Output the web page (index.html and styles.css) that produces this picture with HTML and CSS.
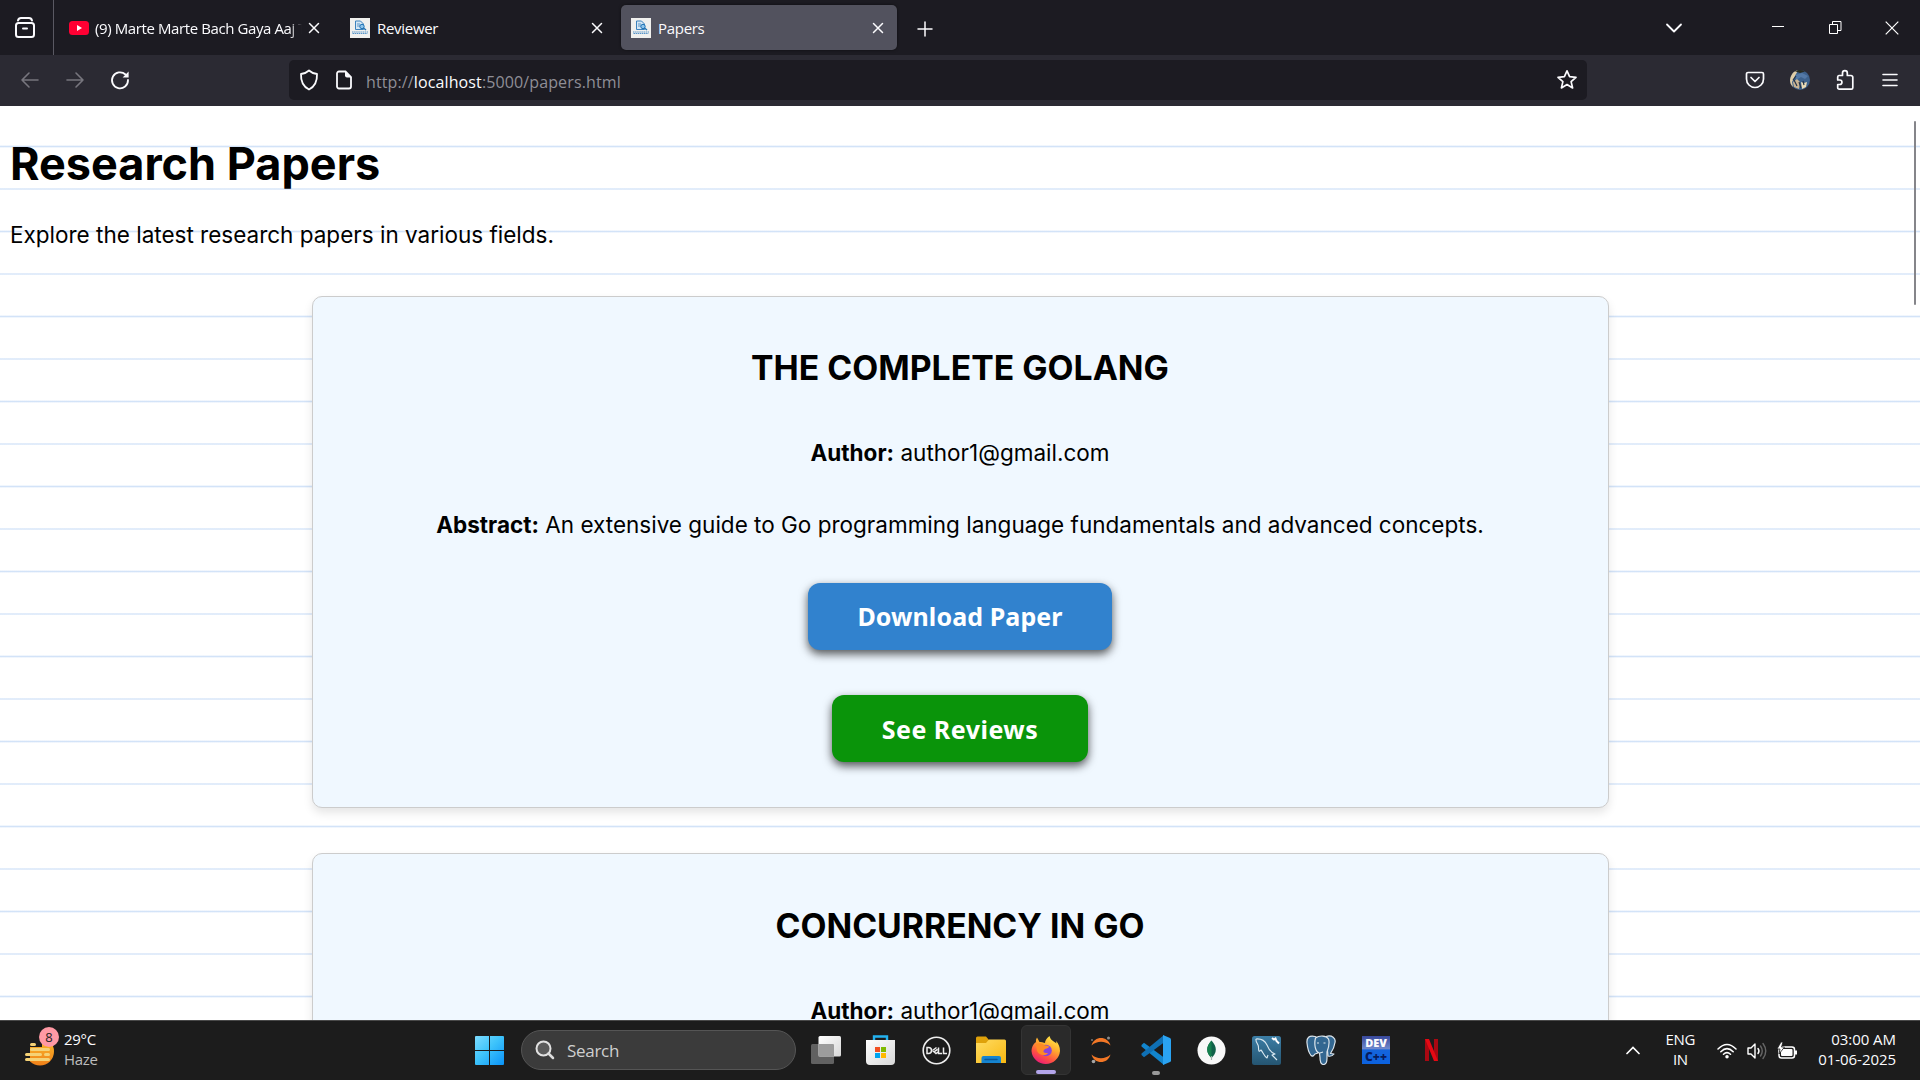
FILE: index.html
```html
<!DOCTYPE html>
<html lang="en">
<head>
<meta charset="utf-8">
<title>Papers</title>
<link rel="stylesheet" href="styles.css">
</head>
<body>
<svg class="defs" width="0" height="0" aria-hidden="true">
  <defs>
    <symbol id="x" viewBox="0 0 12 12"><path d="M1.5 1.5l9 9M10.500 1.500l-9 9" fill="none" stroke="#fbfbfe" stroke-width="1.5" stroke-linecap="round"/></symbol>
    <symbol id="paper" viewBox="0 0 20 20"><rect width="20" height="20" fill="#f0f0ee"/><path d="M5.500 3h5l3 3v5.500h-8z" fill="#d5e6f4" stroke="#3d83bd" stroke-width="1"/><path d="M7 6h3M7 8h4" stroke="#3d83bd" stroke-width=".8"/><circle cx="12" cy="8.500" r="2.200" fill="#8fc5eb" stroke="#2273b4"/><path d="M13.500 10l2.500 2" stroke="#2273b4" stroke-width="1.500"/><path d="M2 14h16M2.500 15.500h15" stroke="#5794c8" stroke-width="1.200" stroke-dasharray="1.500 .6"/></symbol>
  </defs>
</svg>

<header class="tabs">
  <div class="view"><svg width="22" height="26" viewBox="0 0 22 26" fill="none" stroke="#fbfbfe" stroke-width="2" stroke-linecap="round"><path d="M4 5.500C4.500 3.500 5.500 3 7 3h8c1.500 0 2.500.5 3 2.500"/><rect x="2" y="8" width="18" height="14" rx="2.500"/><path d="M9 13.500h4"/></svg></div>
  <div class="tab first"><svg class="fav" viewBox="0 0 20 20"><rect y="3" width="20" height="14" rx="3.500" fill="#ff0033"/><path d="M8 7l5 3-5 3z" fill="#fff"/></svg><span class="label fade">(9) Marte Marte Bach Gaya Aaj T</span><svg class="close"><use href="#x"/></svg></div>
  <div class="tab"><svg class="fav"><use href="#paper"/></svg><span class="label">Reviewer</span><svg class="close"><use href="#x"/></svg></div>
  <div class="tab active"><svg class="fav"><use href="#paper"/></svg><span class="label">Papers</span><svg class="close"><use href="#x"/></svg></div>
  <svg class="plus" width="16" height="16" viewBox="0 0 16 16"><path d="M8 1v14M1 8h14" stroke="#fbfbfe" stroke-width="1.500" stroke-linecap="round"/></svg>
  <div class="win">
    <svg width="18" height="12" viewBox="0 0 18 12"><path d="M2 2.500l7 7 7-7" fill="none" stroke="#fbfbfe" stroke-width="1.800" stroke-linecap="round" stroke-linejoin="round"/></svg>
    <svg class="min" width="12" height="13" viewBox="0 0 12 13"><path d="M0 5.500h12" stroke="#fff"/></svg>
    <svg class="max" width="13" height="13" viewBox="0 0 13 13" fill="none" stroke="#fff"><path d="M.5 3.500h8v9h-8z"/><path d="M3.500 3V.5h8.500v9H9"/></svg>
    <svg class="quit" width="14" height="14" viewBox="0 0 14 14"><path d="M.7.7l12.600 12.600M13.300.7L.7 13.300" stroke="#fff" stroke-width="1.200"/></svg>
  </div>
</header>

<nav class="bar">
  <div class="nav">
    <svg width="20" height="18" viewBox="0 0 20 18" fill="none" stroke="#77767e" stroke-width="1.600" stroke-linecap="round" stroke-linejoin="round"><path d="M18 9H2M9 2L2 9l7 7"/></svg>
    <svg width="20" height="18" viewBox="0 0 20 18" fill="none" stroke="#77767e" stroke-width="1.600" stroke-linecap="round" stroke-linejoin="round"><path d="M2 9h16M11 2l7 7-7 7"/></svg>
    <svg width="20" height="20" viewBox="0 0 20 20"><path d="M18 10A8 8 0 1 1 15.500 4.500" fill="none" stroke="#fbfbfe" stroke-width="1.800" stroke-linecap="round"/><path d="M18.600 1.500v6h-6z" fill="#fbfbfe"/></svg>
  </div>
  <div class="url">
    <svg width="20" height="22" viewBox="0 0 20 22"><path d="M10 1.500c2.500 2.300 5 3.200 8 3.500.3 7-2 12.500-8 15.500C4 17.500 1.700 12 2 5c3-.3 5.500-1.200 8-3.500z" fill="none" stroke="#fbfbfe" stroke-width="1.800" stroke-linejoin="round"/></svg>
    <svg width="16" height="20" viewBox="0 0 16 20"><path d="M3 1.500h6.500L15 7v9.500a2 2 0 0 1-2 2H3a2 2 0 0 1-2-2v-13a2 2 0 0 1 2-2z" fill="none" stroke="#fbfbfe" stroke-width="1.800"/><path d="M9 1l6.500 6.500H11a2 2 0 0 1-2-2z" fill="#fbfbfe"/></svg>
    <span class="addr">http://<b>localhost</b>:5000/papers.html</span>
    <svg class="star" width="22" height="22" viewBox="0 0 22 22"><path d="M11 1.800l2.600 5.900 6.400.6-4.900 4.300 1.500 6.300-5.600-3.300-5.600 3.300 1.500-6.300L2 8.300l6.400-.6z" fill="none" stroke="#fbfbfe" stroke-width="1.700" stroke-linejoin="round"/></svg>
  </div>
  <div class="tools">
    <svg width="20" height="18" viewBox="0 0 20 18" fill="none" stroke="#fbfbfe" stroke-width="1.700" stroke-linecap="round" stroke-linejoin="round"><path d="M3 1.500h14a1.500 1.500 0 0 1 1.500 1.500v5a8.500 8.500 0 0 1-17 0V3A1.500 1.500 0 0 1 3 1.500z"/><path d="M6 6.500l4 4 4-4"/></svg>
    <svg width="20" height="20" viewBox="0 0 20 20"><circle cx="10" cy="10" r="10" fill="#3d628c"/><path d="M0 10C1 4 4 1 8 .3L5 6 2 12l1 5C1 15 0 13 0 10z" fill="#e0cda6"/><path d="M5 1.300Q10-1.300 15 1.500L10 3z" fill="#292b20"/><path d="M5 5l7-2 6 3-3 3-4-2-5 3z" fill="#5379a6"/><path d="M3 12l4-3 3 3-1 7-5-2z" fill="#c9b493"/><path d="M11 12l3 1 3-1-1 5-4 2z" fill="#ecdcb5"/><path d="M9 12l2 6M4 10l3 6M13 11l1 4M6 6l-3 4" stroke="#24344a" stroke-width="1.200" fill="none"/></svg>
    <svg width="20" height="22" viewBox="0 0 20 22"><path d="M4 6.500h3.500V4a2.400 2.400 0 0 1 4.800 0v2.500H16a1.800 1.800 0 0 1 1.800 1.800v10.400a1.500 1.500 0 0 1-1.500 1.500H4.200a1.500 1.500 0 0 1-1.500-1.500V15.500h2a2 2 0 0 0 0-4.500h-2V8A1.500 1.500 0 0 1 4 6.500z" fill="none" stroke="#fbfbfe" stroke-width="1.700" stroke-linejoin="round"/></svg>
    <svg class="menu" width="16" height="14" viewBox="0 0 16 14"><path d="M1 1.500h14M1 7h14M1 12.500h14" stroke="#fbfbfe" stroke-width="1.600" stroke-linecap="round"/></svg>
  </div>
</nav>

<main class="page">
  <h1>Research Papers</h1>
  <p class="intro">Explore the latest research papers in various fields.</p>
  <article class="card">
    <h2>THE COMPLETE GOLANG</h2>
    <p><strong>Author:</strong> author1@gmail.com</p>
    <p><strong>Abstract:</strong> An extensive guide to Go programming language fundamentals and advanced concepts.</p>
    <a class="btn download">Download Paper</a>
    <a class="btn reviews">See Reviews</a>
  </article>
  <article class="card next">
    <h2>CONCURRENCY IN GO</h2>
    <p><strong>Author:</strong> author1@gmail.com</p>
  </article>
  <i class="scroll"></i>
</main>

<footer class="taskbar">
  <div class="weather">
    <div class="haze"><svg width="30" height="30" viewBox="0 0 30 30"><defs><linearGradient id="sun" x2="0" y2="1"><stop stop-color="#fbbf2c"/><stop offset="1" stop-color="#f08019"/></linearGradient></defs><circle cx="15" cy="14.500" r="14" fill="url(#sun)"/><path d="M0 0h17v10H0zM0 10h5v15H0z" fill="#1c1c1c"/><path d="M6.500 7.500h3M6.500 12.500h17M1.500 17.500h14M20.500 17.500h3M1.500 22.500h22" stroke="#f5d276" stroke-width="3" stroke-linecap="round"/></svg><b class="badge">8</b></div>
    <div class="wtext"><span>29°C</span><em>Haze</em></div>
  </div>
  <div class="apps">
    <svg class="start" width="29" height="29" viewBox="0 0 29 29"><defs><linearGradient id="w" x2="1" y2="1"><stop stop-color="#7ddcff"/><stop offset=".45" stop-color="#3fc4fb"/><stop offset="1" stop-color="#0a93f8"/></linearGradient></defs><path d="M1 0h13v14H0V1a1 1 0 0 1 1-1zM15 0h13a1 1 0 0 1 1 1v13H15zM0 15h14v14H1a1 1 0 0 1-1-1zM15 15h14v13a1 1 0 0 1-1 1H15z" fill="url(#w)"/></svg>
    <div class="search"><svg width="20" height="20" viewBox="0 0 20 20"><circle cx="8.500" cy="8.500" r="7" fill="#5b5b5b" stroke="#e2e2e2" stroke-width="2"/><path d="M13.500 13.500l4.500 4.500" stroke="#ddd" stroke-width="2.500" stroke-linecap="round"/></svg><span>Search</span></div>
    <div class="slot"><svg width="30" height="28" viewBox="0 0 30 28"><defs><linearGradient id="tv" x2="1" y2="1"><stop stop-color="#fff"/><stop offset="1" stop-color="#d8d8d8"/></linearGradient></defs><rect y="8" width="23" height="20" rx="1.500" fill="#616161"/><rect x="7.500" width="22.500" height="20.500" rx="1.500" fill="url(#tv)"/><path d="M7.500 8H22a1 1 0 0 1 1 1v11.500H7.500z" fill="#9c9c9c"/></svg></div>
    <div class="slot store"><svg width="29" height="30" viewBox="0 0 29 30"><path d="M8 6V1.500h13V6" fill="none" stroke="#23b2ef" stroke-width="2.400"/><path d="M0 5h29v21a4 4 0 0 1-4 4H4a4 4 0 0 1-4-4z" fill="url(#tv)"/><path d="M9 12h5v5H9z" fill="#f25022"/><path d="M15 12h5v5h-5z" fill="#7fba00"/><path d="M9 18h5v5H9z" fill="#00a4ef"/><path d="M15 18h5v5h-5z" fill="#ffb900"/></svg></div>
    <div class="slot"><svg width="29" height="29" viewBox="0 0 29 29" fill="none" stroke="#eee"><circle cx="14.500" cy="14.500" r="13.300" stroke-width="1.600"/><path d="M5 11.500v6h1.500a3 3 0 0 0 0-6zM16.500 11.500v6h3.500M21.500 11.500v6H25M10.500 14.500l4-3M10.500 14.500l3.500 3 2-1.500M12 15.800l3.500-2.500" stroke-width="1.500"/></svg></div>
    <div class="slot"><svg width="30" height="28" viewBox="0 0 30 28"><defs><linearGradient id="fo" x2="1" y2="1"><stop stop-color="#ffdc63"/><stop offset="1" stop-color="#f8b811"/></linearGradient></defs><path d="M0 2a1.500 1.500 0 0 1 1.500-1.500H10L13 4v4H0z" fill="#dfa10a"/><path d="M0 7h10l3-3.500h15.500A1.500 1.500 0 0 1 30 5v22H0z" fill="url(#fo)"/><path d="M5.500 27v-5a2 2 0 0 1 2-2h15.500a2 2 0 0 1 2 2v5z" fill="#1684d0"/><path d="M9 23.500h12" stroke="#0b5799" stroke-width="1.500" stroke-linecap="round"/></svg></div>
    <div class="slot on"><svg width="30" height="30" viewBox="0 0 30 30"><defs><linearGradient id="ff" x1=".8" x2=".25" y2="1"><stop stop-color="#fff04b"/><stop offset=".38" stop-color="#ffab2e"/><stop offset=".7" stop-color="#ff5341"/><stop offset="1" stop-color="#e9157c"/></linearGradient></defs><path d="M18.500 1c-3 2-4.500 5-4.500 7-1-.5-4.500-1-5.500-1L6 2.500C5 4 4.800 5.500 5 7 2 9 .5 12.500.5 16A14.300 14.300 0 0 0 29 16c0-4-1.500-7.500-4-10l.5 2.500C22 6 19.500 5 18.500 1z" fill="url(#ff)"/><circle cx="15" cy="15.500" r="5.800" fill="#8744dc"/><path d="M5 9c4-2 7 0 9 1.500 2.500 0 4 .5 4 1.500-1 1.500-4 1.500-5 3-1.500 2 .5 3.500 4 3-3 4-9 2-11-2z" fill="#ff8b24"/></svg></div>
    <div class="slot"><svg width="22" height="28" viewBox="0 0 22 28"><path d="M1.500 9.500C4-.5 18-.5 20.500 9.500 15 4.500 7 4.500 1.500 9.500zM1.500 18.500c2.500 10 16.500 10 19 0-5.500 5-13.500 5-19 0z" fill="#f37726"/><circle cx="18.500" cy="2" r="1.500" fill="#8a8a8a"/><circle cx="2" cy="4" r="1" fill="#777"/><circle cx="3.500" cy="25.500" r="1.800" fill="#a5a5a5"/></svg></div>
    <div class="slot run"><svg width="30" height="30" viewBox="0 0 30 30"><path d="M.5 10l2.500-2.200L23 22.500V30L.5 11.500z" fill="#1285cd"/><path d="M.5 20l2.500 2.200L23 7.500V0L.5 18.500z" fill="#0f70b5"/><path d="M22 0l7 3q1 .5 1 1.500v21q0 1-1 1.500l-7 3z" fill="#2aa3f2"/></svg></div>
    <div class="slot"><svg width="29" height="29" viewBox="0 0 29 29"><circle cx="14.500" cy="14.500" r="14" fill="#f8f8f8"/><path d="M14.500 4.500c6 6.500 5.500 12.500 0 17.500C9 17 8.500 11 14.500 4.500z" fill="#116149"/><path d="M14.500 4.500v17.500c-5.500-5-6-11 0-17.500z" fill="#16804e"/><path d="M14.500 20v4" stroke="#9fb3a9" stroke-width="1.200"/></svg></div>
    <div class="slot"><svg width="29" height="29" viewBox="0 0 29 29"><defs><linearGradient id="my" x2="0" y2="1"><stop stop-color="#3c7ea6"/><stop offset="1" stop-color="#255571"/></linearGradient></defs><rect width="29" height="29" rx="2.500" fill="url(#my)"/><path d="M4 3c5-.5 9 2 11 6 1.500 4 3 7 8 9l-3 1 5 5M4 3c-.5 2 1 4 2 6s0 4 1 6c1 1 1-1 2-1 2 2 3 6 6 8l1-3" fill="none" stroke="#d9e8f0" stroke-width="1.100" stroke-linejoin="round"/><path d="M20 2l2 1.500 1.500-1 1 2.500 2.500 2.500" fill="none" stroke="#fff" stroke-width="2"/></svg></div>
    <div class="slot"><svg width="30" height="30" viewBox="0 0 30 30" fill="#336791" stroke="#dce5ec" stroke-width="1.200" stroke-linejoin="round"><path d="M9 1.500C3 0 .5 3 1 8c.5 5 2 10 4 12.500 1.500 1.500 3 0 4-1.500l3-1V3z"/><path d="M20 1.500c6-2 10 2 9 6-.5 4-2.500 8-4.500 11l3.500.5c-1.500 2-4 2.500-6 2z"/><path d="M9.500 3c4-3 11-2.500 13 1 1.500 4 0 9-1.500 13v6c0 4-1 6.500-3.500 6.500S14 27 14 22.500L13.500 18C9 17 8 9 9.500 3z"/><path d="M11 8h2M17.500 8h2M14 18l3-1" fill="none"/></svg></div>
    <div class="slot"><div class="dev"><b>DEV</b><b>C++</b></div></div>
    <div class="slot"><svg width="13" height="22" viewBox="0 0 13 22"><path d="M0 0h4v22H0zM9 0h4v22H9z" fill="#a90812"/><path d="M0 0h4l9 22H9z" fill="#e50914"/></svg></div>
  </div>
  <div class="tray">
    <svg class="up" width="14" height="9" viewBox="0 0 14 9"><path d="M1 7.500l6-6 6 6" fill="none" stroke="#fff" stroke-width="1.700" stroke-linecap="round"/></svg>
    <div class="lang"><span>ENG</span><span>IN</span></div>
    <svg width="20" height="16" viewBox="0 0 20 16" fill="none" stroke="#fff" stroke-width="1.500" stroke-linecap="round"><path d="M1 6Q10-3 19 6M3.800 8.700Q10 2.500 16.200 8.700M6.500 11.300q3.500-3.300 7 0"/><circle cx="10" cy="13.800" r="1" fill="#fff"/></svg>
    <svg width="20" height="18" viewBox="0 0 20 18" fill="none" stroke-width="1.400" stroke-linecap="round"><path d="M1 6h3l4-4v14l-4-4H1z" stroke="#fff" stroke-linejoin="round"/><path d="M11 6.500q2 2.500 0 5" stroke="#fff"/><path d="M13.500 4q3.500 5 0 10M16 1.500q5.500 7.500 0 15" stroke="#666"/></svg>
    <svg width="21" height="18" viewBox="0 0 21 18"><rect x="2" y="5" width="15.500" height="11" rx="2.500" fill="none" stroke="#fff" stroke-width="1.500"/><rect x="4" y="7" width="11.500" height="7" rx="1" fill="#fff"/><path d="M19 8.500v4" stroke="#fff" stroke-width="2"/><path d="M4 0L0 7h3l-1 5 5.500-7H4.500L6 0z" fill="#fff" stroke="#1c1c1c" stroke-width=".8"/></svg>
    <div class="clock"><span>03:00 AM</span><span>01-06-2025</span></div>
  </div>
</footer>
</body>
</html>
```
FILE: styles.css
```css
* { box-sizing: border-box; }
body {
  margin: 0; width: 1920px; height: 1080px; overflow: hidden;
  display: flex; flex-direction: column;
  font-family: "Open Sans", "Noto Sans", sans-serif; color: #fbfbfe;
}
svg { display: block; flex: none; }
.defs { display: none; }
p, h1, h2 { margin: 0; }

/* tab strip */
.tabs { flex: none; height: 55px; background: #1c1b22; display: flex; align-items: center; }
.view { width: 54px; height: 55px; border-right: 1px solid #5a5963; padding: 15px 0 0 14px; }
.tab { width: 276px; height: 45px; margin-left: 5px; border-radius: 5px; padding: 0 13px 0 10px; display: flex; align-items: center; gap: 7px; }
.first { padding-right: 15px; gap: 6px; }
.active { background: #52525e; box-shadow: 0 0 3px #0008; }
.fav { width: 20px; height: 20px; }
.label { flex: 1; min-width: 0; overflow: hidden; white-space: nowrap; font-size: 15px; letter-spacing: -.3px; }
.fade { letter-spacing: -.4px; -webkit-mask-image: linear-gradient(90deg, #000 94%, transparent); mask-image: linear-gradient(90deg, #000 94%, transparent); }
.close { width: 12px; height: 12px; }
.plus { margin: 2px 0 0 20px; }
.win { margin-left: auto; display: flex; align-items: center; padding-right: 21px; }
.min { margin-left: 89px; }
.max { margin-left: 45px; }
.quit { margin-left: 43px; }

/* navigation bar */
.bar { flex: none; height: 51px; background: #2b2a33; display: flex; align-items: center; }
.nav { display: flex; align-items: center; gap: 25px; width: 289px; padding: 0 0 2px 20px; }
.url { width: 1298px; height: 40px; margin-bottom: 1px; background: #1c1b22; border-radius: 5px; display: flex; align-items: center; padding: 0 9px 0 10px; }
.url svg + svg { margin-left: 17px; }
.addr { margin-left: 14px; font-size: 16px; letter-spacing: .12px; color: #8f8e96; flex: 1; padding-top: 4px; }
.addr b { font-weight: 400; color: #fbfbfe; }
.tools { margin-left: auto; display: flex; align-items: center; gap: 25px; padding: 0 22px 2px 0; }
.menu { margin-left: 2px; }

/* ruled page */
.page {
  position: relative; flex: 1; min-height: 0; overflow: hidden; color: #000;
  font: 22.5px "Inter", sans-serif; padding: 0 10px;
  background: repeating-linear-gradient(#fff 0 39px, #d3e3f8 40.5px, #fff 42px 42.5px);
}
h1 { font-size: 45px; line-height: 54px; padding-top: 31px; font-weight: 700; }
.intro { line-height: 28px; margin-top: 30px; margin-bottom: 47px; }
.card {
  width: 1297px; margin: 0 auto 45px 302px; height: 512px; padding: 50px 1px 0 0;
  background: #f0f8ff; border: 1px solid #ccc; border-radius: 10px; box-shadow: 0 5px 10px #0000001a;
  display: flex; flex-direction: column; align-items: center; text-align: center;
}
.next { padding-top: 51px; }
h2 { font-size: 33.75px; line-height: 42px; font-weight: 700; }
.card p { line-height: 28px; margin-top: 44px; }
.card h2 + p { margin-top: 50px; }
.btn {
  height: 67px; margin-top: 45px; border-radius: 12px; color: #fff; box-shadow: 0 4px 10px #000a;
  font: 700 25px/67px "Noto Sans", sans-serif;
}
.download { width: 304px; background: #3182ce; margin-top: 44px; letter-spacing: .1px; }
.reviews { width: 256px; background: #0a940a; letter-spacing: .5px; line-height: 68px; }
.scroll { position: absolute; right: 4px; top: 15px; width: 2px; height: 184px; background: #85858a; border-radius: 1px; }

/* taskbar */
.taskbar { flex: none; height: 60px; background: #1c1c1c; border-top: 1px solid #494949; display: flex; align-items: center; font-size: 15px; line-height: 20px; }
.weather { width: 475px; padding-left: 25px; display: flex; align-items: center; gap: 9px; }
.haze { position: relative; padding-top: 3px; }
.badge { position: absolute; left: 14px; top: -7px; width: 20px; height: 20px; border-radius: 50%; background: #ff99a4; color: #222; font: 13px/20px "Open Sans", sans-serif; text-align: center; }
.wtext, .lang, .clock { padding-bottom: 3px; }
.wtext span, .wtext em, .lang span, .clock span { display: block; font-style: normal; letter-spacing: -.3px; }
.wtext em { color: #bdbdbd; }
.apps { display: flex; align-items: center; padding-bottom: 1px; }
.search { width: 275px; height: 40px; margin: 0 0 0 17px; border-radius: 20px; background: #3b3b3b; border: 1px solid #555; display: flex; align-items: center; gap: 12px; padding-left: 13px; color: #cfcfcf; font-size: 17px; letter-spacing: -.3px; }
.search span { padding-top: 1px; }
.slot { position: relative; width: 50px; height: 50px; margin-left: 5px; border-radius: 6px; display: grid; place-items: center; }
.store { padding-right: 2px; }
.on { background: #2a2a2a; border: 1px solid #343434; }
.on::after, .run::after { content: ""; position: absolute; bottom: 0; left: 14px; width: 20px; height: 4px; border-radius: 2px; background: #b3a5ea; }
.run::after { left: 21px; width: 8px; background: #999; }
.dev { width: 28px; height: 28px; background: linear-gradient(#38489b, #6f88cc 45%, #1565dc 50%, #0b62e0); font: 900 11px/14px "Noto Sans", sans-serif; text-align: center; display: flex; flex-direction: column; align-items: center; }
.dev b + b { color: #071c5e; font-size: 12px; }
.tray { margin-left: auto; display: flex; align-items: center; padding-right: 24px; }
.up { margin-right: 26px; }
.lang { text-align: center; margin-right: 22px; }
.tray svg + svg { margin-left: 10px; }
.clock { text-align: right; margin-left: 20px; }
.clock span { letter-spacing: -.05px; }
```
